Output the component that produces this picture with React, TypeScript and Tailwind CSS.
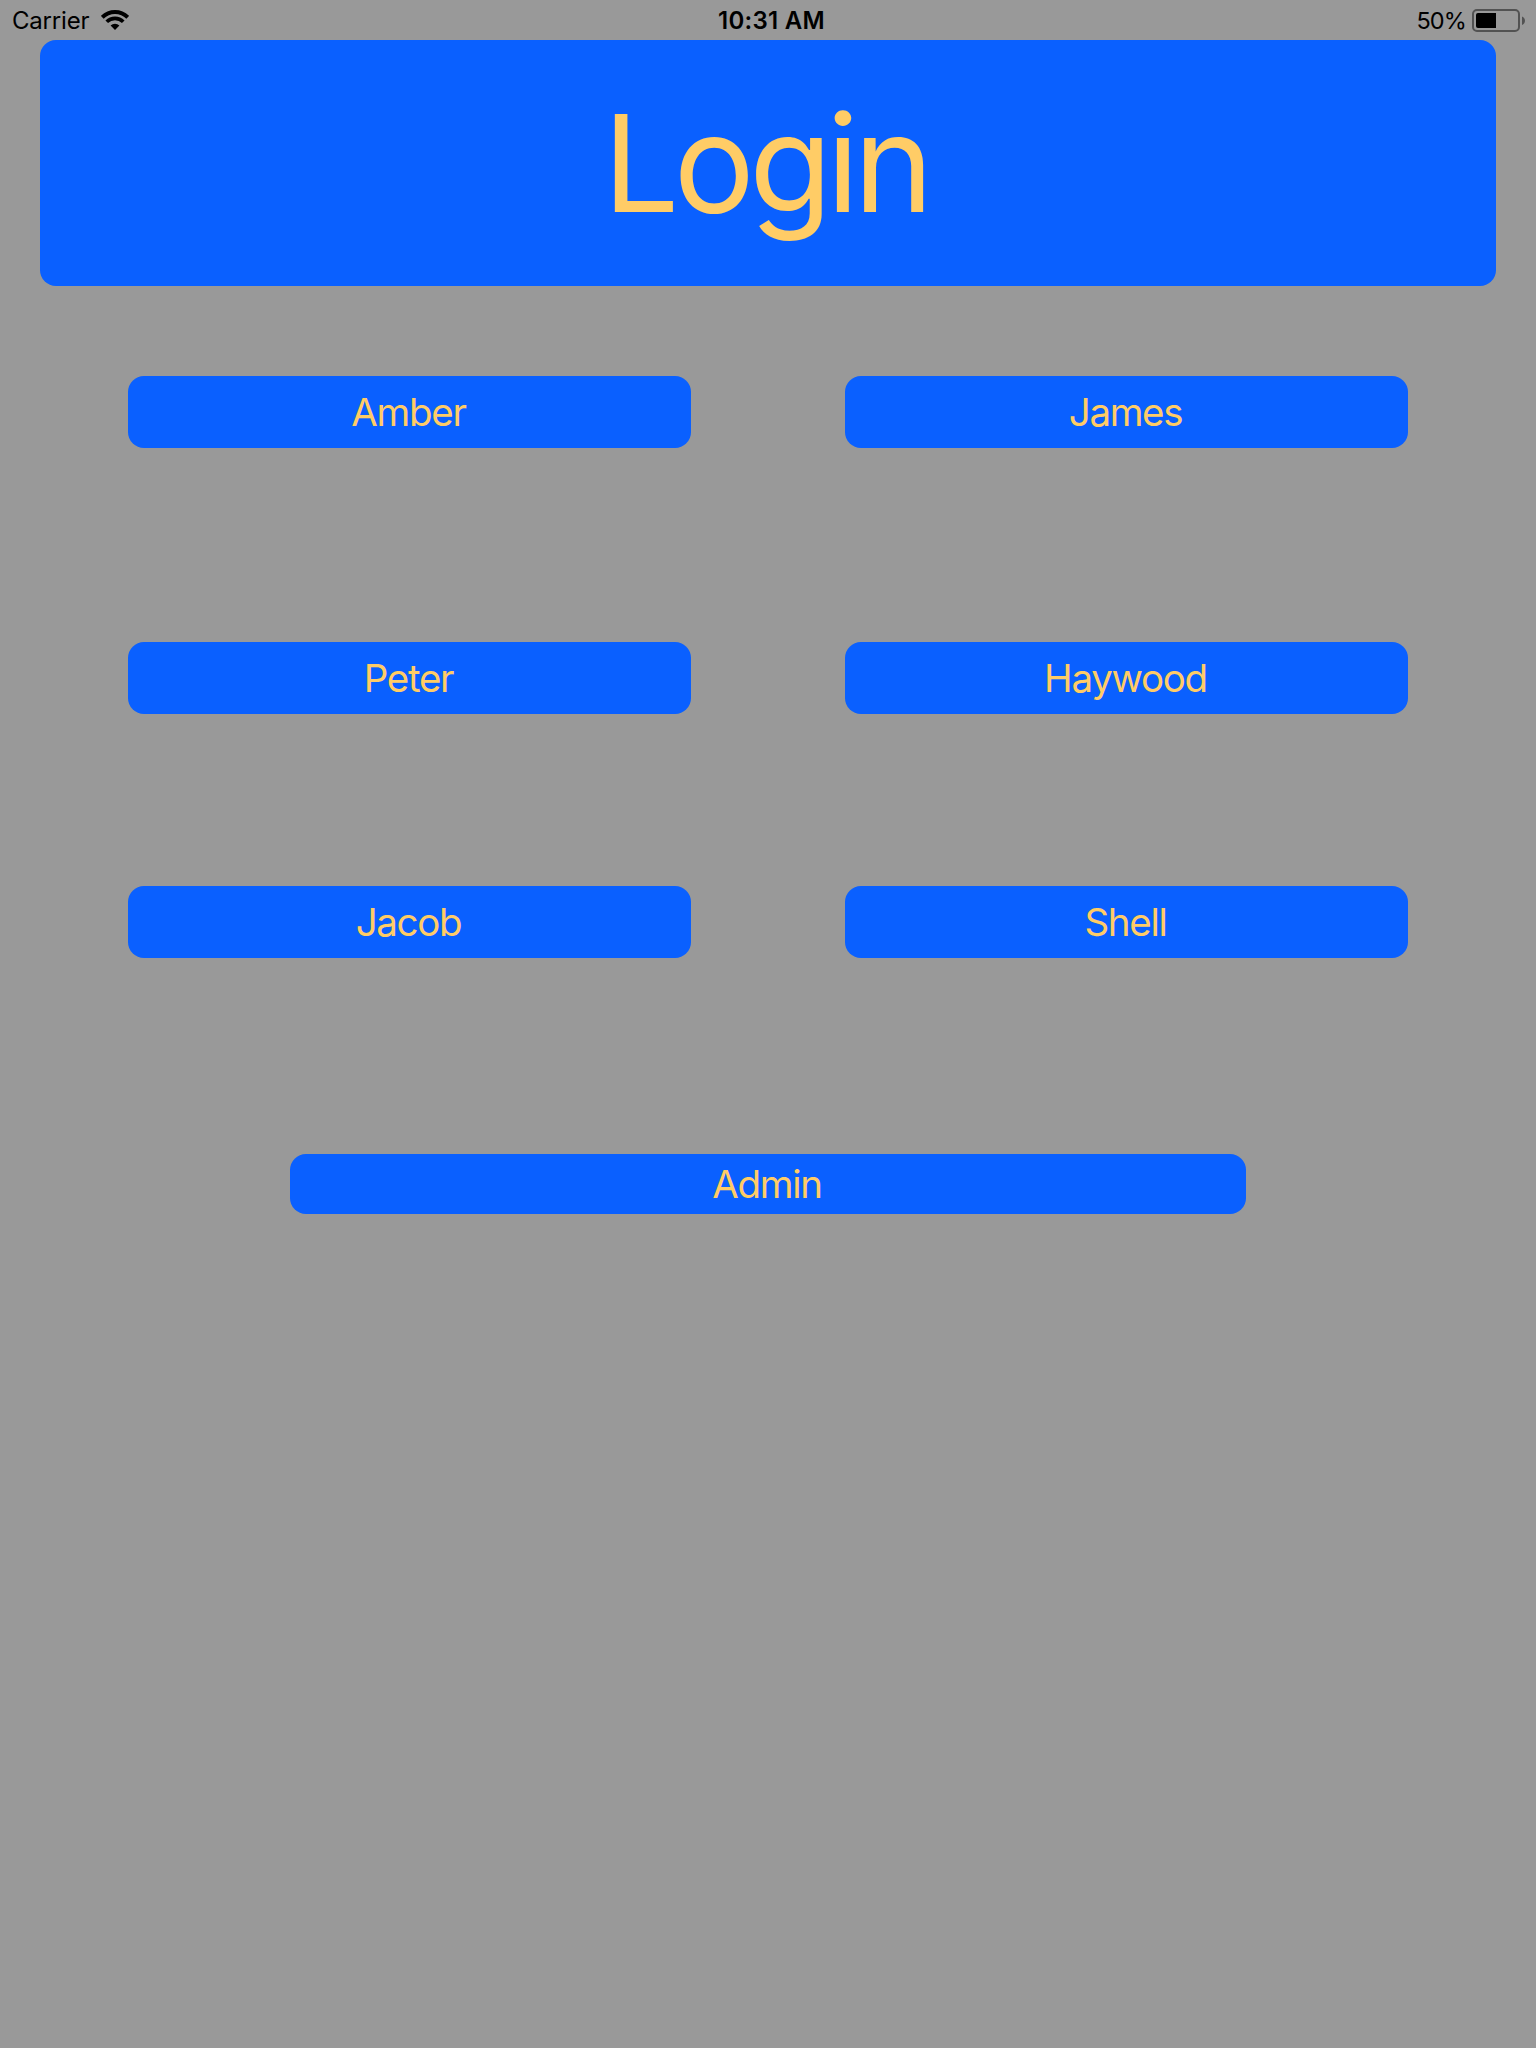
import React from "react";

const buttonClass =
  "flex items-center justify-center rounded-[16px] bg-[#0a60ff] pr-[2px] text-[38.5px] leading-none tracking-[-1.3px] text-[#ffcc66]";

function NameButton({ name }: { name: string }) {
  return <button className={`${buttonClass} h-[72px] w-[563px]`}>{name}</button>;
}

export default function App() {
  return (
    <div className="flex h-[2048px] w-[1536px] flex-col bg-[#999999] font-['Inter',sans-serif]">
      <header className="flex h-10 items-center justify-between pt-px pl-3 pr-[11px] text-[24px] leading-none text-black">
        <div className="flex w-[400px] items-center gap-[12px]">
          <span className="tracking-[-0.2px]">Carrier</span>
          <svg width="28" height="21" viewBox="0 0 28 21">
            <path d="M14 20l4.4-4.4a6.2 6.2 0 0 0-8.8 0z" />
            <path d="M5.73 11.73a11.7 11.7 0 0 1 16.54 0" fill="none" stroke="black" strokeWidth="3.7" />
            <path d="M1.27 7.27a18 18 0 0 1 25.46 0" fill="none" stroke="black" strokeWidth="3.9" />
          </svg>
        </div>
        <span className="pl-[6px] font-semibold tracking-[0.3px]">10:31 AM</span>
        <div className="flex w-[400px] items-center justify-end gap-[6px]">
          <span className="text-[23.5px] tracking-[-0.9px]">50%</span>
          <svg width="53" height="23" viewBox="0 0 53 23">
            <rect x="1" y="1" width="46" height="21" rx="4" fill="none" stroke="#525252" strokeWidth="2" />
            <path d="M6 4h18v15H6a2 2 0 0 1-2-2V6a2 2 0 0 1 2-2z" />
            <path d="M50 7.5c4 1.5 4 7 0 8.5z" fill="#525252" />
          </svg>
        </div>
      </header>
      <h1 className="mx-10 flex h-[246px] items-center justify-center rounded-[16px] bg-[#0a60ff] pr-[5px] text-[135px] leading-none tracking-[-5.5px] text-[#ffcc66]">
        Login
      </h1>
      <main className="flex flex-col items-center">
        <div className="mt-[90px] flex w-[1280px] justify-between">
          <NameButton name="Amber" />
          <NameButton name="James" />
        </div>
        <div className="mt-[194px] flex w-[1280px] justify-between">
          <NameButton name="Peter" />
          <NameButton name="Haywood" />
        </div>
        <div className="mt-[172px] flex w-[1280px] justify-between">
          <NameButton name="Jacob" />
          <NameButton name="Shell" />
        </div>
        <button className={`${buttonClass} mt-[196px] h-[60px] w-[956px]`}>Admin</button>
      </main>
    </div>
  );
}
